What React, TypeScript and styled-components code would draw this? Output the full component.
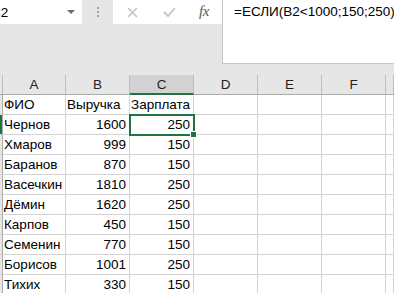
import styled, { createGlobalStyle } from "styled-components"

const GlobalStyle = createGlobalStyle`
    html, body {
        margin: 0;
        padding: 0;
        background: #ffffff;
    }
    body {
        font-family: "Liberation Sans", Arial, sans-serif;
        font-size: 13.5px;
        color: #000000;
    }
`

const Window = styled.div`
    width: 394px;
    height: 293px;
    overflow: hidden;
    background: #ffffff;
`

const TopArea = styled.div`
    display: flex;
    height: 75px;
    background: #e6e6e6;
`

const Toolbar = styled.div`
    display: flex;
    width: 226px;
    height: 24px;
`

const NameBox = styled.div`
    width: 82px;
    display: flex;
    align-items: center;
    justify-content: space-between;
    background: #ffffff;
    overflow: hidden;
    padding-right: 7px;
    box-sizing: border-box;
`

const NameText = styled.span`
    margin-left: -9px;
    color: #000;
`

const DropArrow = styled.span`
    width: 0;
    height: 0;
    border-left: 4px solid transparent;
    border-right: 4px solid transparent;
    border-top: 4px solid #6d6d6d;
`

const Grip = styled.div`
    width: 31px;
    display: flex;
    flex-direction: column;
    align-items: center;
    justify-content: center;
    gap: 2px;
`

const GripDot = styled.span`
    width: 2px;
    height: 2px;
    background: #a6a6a6;
`

const FnBox = styled.div`
    width: 109px;
    background: #ffffff;
    display: flex;
    align-items: center;
    padding-left: 14px;
    box-sizing: border-box;
`

const IconSlot = styled.span<{ w: number }>`
    width: ${p => p.w}px;
    display: flex;
    align-items: center;
`

const Fx = styled.span`
    font-family: "Liberation Serif", "Times New Roman", serif;
    font-style: italic;
    font-size: 15px;
    color: #555555;
    letter-spacing: -0.5px;
    padding-bottom: 1px;
`

const FormulaBar = styled.div`
    flex: 1;
    height: 64px;
    background: #ffffff;
    border-left: 1px solid #c6c6c6;
    border-bottom: 1px solid #c6c6c6;
    box-sizing: border-box;
    padding: 4px 0 0 11px;
    white-space: nowrap;
`

const Sheet = styled.div`
    display: grid;
    grid-template-columns: 3px 63px 64px 64px 64px 64px 64px 1fr;
`

const HeadCell = styled.div<{ active?: boolean }>`
    height: 20px;
    box-sizing: border-box;
    background: ${p => (p.active ? "#d2d2d2" : "#e6e6e6")};
    border-right: 1px solid #bdbdbd;
    border-bottom: ${p => (p.active ? "2px solid #217346" : "1px solid #ababab")};
    display: flex;
    align-items: center;
    justify-content: center;
    padding-top: ${p => (p.active ? "1px" : "0")};
    color: #222;
`

const RowHead = styled.div<{ active?: boolean }>`
    height: 20px;
    box-sizing: border-box;
    background: ${p => (p.active ? "#217346" : "#e6e6e6")};
    border-right: 1px solid #ababab;
    border-bottom: 1px solid #d4d4d4;
`

const Cell = styled.div<{ num?: boolean; selected?: boolean }>`
    position: relative;
    height: 20px;
    box-sizing: border-box;
    border-right: 1px solid #d4d4d4;
    border-bottom: 1px solid #d4d4d4;
    padding: 0 ${p => (p.num ? "3px" : "0")} 0 1px;
    display: flex;
    align-items: center;
    justify-content: ${p => (p.num ? "flex-end" : "flex-start")};
    white-space: nowrap;
    overflow: visible;
    ${p => p.selected && `
        outline: 2px solid #217346;
        outline-offset: -1px;
        z-index: 1;
    `}
`

const FillHandle = styled.span`
    position: absolute;
    right: -4px;
    bottom: -4px;
    width: 5px;
    height: 5px;
    background: #217346;
    border: 1px solid #ffffff;
`

const columns = ["A", "B", "C", "D", "E", "F", ""]

const rows: [string, string, string][] = [
    ["ФИО", "Выручка", "Зарплата"],
    ["Чернов", "1600", "250"],
    ["Хмаров", "999", "150"],
    ["Баранов", "870", "150"],
    ["Васечкин", "1810", "250"],
    ["Дёмин", "1620", "250"],
    ["Карпов", "450", "150"],
    ["Семенин", "770", "150"],
    ["Борисов", "1001", "250"],
    ["Тихих", "330", "150"],
]

const CrossIcon = () => (
    <svg width="11" height="11" viewBox="0 0 11 11">
        <path d="M1 1 L10 10 M10 1 L1 10" stroke="#c4c4c4" strokeWidth="1.6" fill="none" />
    </svg>
)

const CheckIcon = () => (
    <svg width="13" height="10" viewBox="0 0 13 10">
        <path d="M1 5 L5 9 L12 1" stroke="#c4c4c4" strokeWidth="1.8" fill="none" />
    </svg>
)

const App = () => {
    return (
        <Window>
            <GlobalStyle />
            <TopArea>
                <Toolbar>
                    <NameBox>
                        <NameText>C2</NameText>
                        <DropArrow />
                    </NameBox>
                    <Grip>
                        <GripDot />
                        <GripDot />
                        <GripDot />
                    </Grip>
                    <FnBox>
                        <IconSlot w={36}><CrossIcon /></IconSlot>
                        <IconSlot w={36}><CheckIcon /></IconSlot>
                        <Fx>fx</Fx>
                    </FnBox>
                </Toolbar>
                <FormulaBar>=ЕСЛИ(B2&lt;1000;150;250)</FormulaBar>
            </TopArea>
            <Sheet>
                <HeadCell />
                {columns.map((c, i) => (
                    <HeadCell key={i} active={c === "C"}>{c}</HeadCell>
                ))}
                {rows.map((r, ri) => (
                    <>
                        <RowHead key={"h" + ri} active={ri === 1} />
                        <Cell key={"a" + ri}>{r[0]}</Cell>
                        <Cell key={"b" + ri} num={ri > 0}>{r[1]}</Cell>
                        <Cell key={"c" + ri} num={ri > 0} selected={ri === 1}>
                            {r[2]}
                            {ri === 1 && <FillHandle />}
                        </Cell>
                        <Cell key={"d" + ri} />
                        <Cell key={"e" + ri} />
                        <Cell key={"f" + ri} />
                        <Cell key={"g" + ri} />
                    </>
                ))}
            </Sheet>
        </Window>
    )
}

export default App
